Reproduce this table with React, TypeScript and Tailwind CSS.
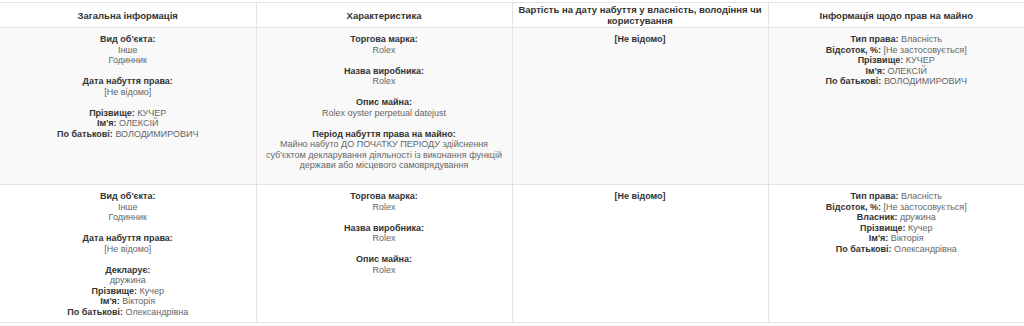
import React from "react";

type Line = { label?: string; value?: string };

function Field({ label, value }: Line) {
  return (
    <div>
      {label && <span className="font-bold text-[#333]">{label}</span>}
      {label && value ? " " : null}
      {value && <span className="text-[#666]">{value}</span>}
    </div>
  );
}

function Block({ title, lines }: { title: string; lines: string[] }) {
  return (
    <div className="mb-[10.5px] last:mb-0">
      <div className="font-bold text-[#333]">{title}</div>
      {lines.map((l) => (
        <div key={l} className="text-[#666]">
          {l}
        </div>
      ))}
    </div>
  );
}

const rows = [
  {
    striped: true,
    height: "h-[157px]",
    general: (
      <>
        <Block title="Вид об'єкта:" lines={["Інше", "Годинник"]} />
        <Block title="Дата набуття права:" lines={["[Не відомо]"]} />
        <div>
          <Field label="Прізвище:" value="КУЧЕР" />
          <Field label="Ім'я:" value="ОЛЕКСІЙ" />
          <Field label="По батькові:" value="ВОЛОДИМИРОВИЧ" />
        </div>
      </>
    ),
    details: (
      <>
        <Block title="Торгова марка:" lines={["Rolex"]} />
        <Block title="Назва виробника:" lines={["Rolex"]} />
        <Block title="Опис майна:" lines={["Rolex oyster perpetual datejust"]} />
        <div>
          <div className="font-bold text-[#333]">Період набуття права на майно:</div>
          <div className="text-[#666]">
            Майно набуто ДО ПОЧАТКУ ПЕРІОДУ здійснення суб'єктом декларування діяльності із
            виконання функцій держави або місцевого самоврядування
          </div>
        </div>
      </>
    ),
    rights: [
      { label: "Тип права:", value: "Власність" },
      { label: "Відсоток, %:", value: "[Не застосовується]" },
      { label: "Прізвище:", value: "КУЧЕР" },
      { label: "Ім'я:", value: "ОЛЕКСІЙ" },
      { label: "По батькові:", value: "ВОЛОДИМИРОВИЧ" },
    ],
  },
  {
    striped: false,
    height: "h-[138px]",
    general: (
      <>
        <Block title="Вид об'єкта:" lines={["Інше", "Годинник"]} />
        <Block title="Дата набуття права:" lines={["[Не відомо]"]} />
        <div>
          <div className="font-bold text-[#333]">Декларує:</div>
          <div className="text-[#666]">дружина</div>
          <Field label="Прізвище:" value="Кучер" />
          <Field label="Ім'я:" value="Вікторія" />
          <Field label="По батькові:" value="Олександрівна" />
        </div>
      </>
    ),
    details: (
      <>
        <Block title="Торгова марка:" lines={["Rolex"]} />
        <Block title="Назва виробника:" lines={["Rolex"]} />
        <Block title="Опис майна:" lines={["Rolex"]} />
      </>
    ),
    rights: [
      { label: "Тип права:", value: "Власність" },
      { label: "Відсоток, %:", value: "[Не застосовується]" },
      { label: "Власник:", value: "дружина" },
      { label: "Прізвище:", value: "Кучер" },
      { label: "Ім'я:", value: "Вікторія" },
      { label: "По батькові:", value: "Олександрівна" },
    ],
  },
];

const headers = [
  "Загальна інформація",
  "Характеристика",
  "Вартість на дату набуття у власність, володіння чи користування",
  "Інформація щодо прав на майно",
];

export default function App() {
  return (
    <div className="w-[1024px] h-[326px] bg-white pt-[2px] font-['Liberation_Sans',Arial,sans-serif] text-[9px] leading-[10.5px]">
      <table className="w-full table-fixed border-collapse">
        <thead>
          <tr className="h-[25px] border-y border-[#e3e3e3]">
            {headers.map((h, i) => (
              <th
                key={h}
                className={`px-1 py-px align-middle text-center font-bold text-[9.5px] leading-[11px] text-[#333] ${
                  i > 0 ? "border-l border-[#e3e3e3]" : ""
                }`}
              >
                {h}
              </th>
            ))}
          </tr>
        </thead>
        <tbody>
          {rows.map((r, idx) => (
            <tr
              key={idx}
              className={`${r.height} border-b border-[#e3e3e3] ${r.striped ? "bg-[#f9f9f9]" : "bg-white"}`}
            >
              <td className="px-1 pt-[6px] align-top text-center">{r.general}</td>
              <td className="px-1 pt-[6px] align-top text-center border-l border-[#e3e3e3]">{r.details}</td>
              <td className="px-1 pt-[6px] align-top text-center border-l border-[#e3e3e3]">
                <div className="font-bold text-[#333]">[Не відомо]</div>
              </td>
              <td className="px-1 pt-[6px] align-top text-center border-l border-[#e3e3e3]">
                {r.rights.map((f) => (
                  <Field key={f.label} label={f.label} value={f.value} />
                ))}
              </td>
            </tr>
          ))}
        </tbody>
      </table>
    </div>
  );
}
